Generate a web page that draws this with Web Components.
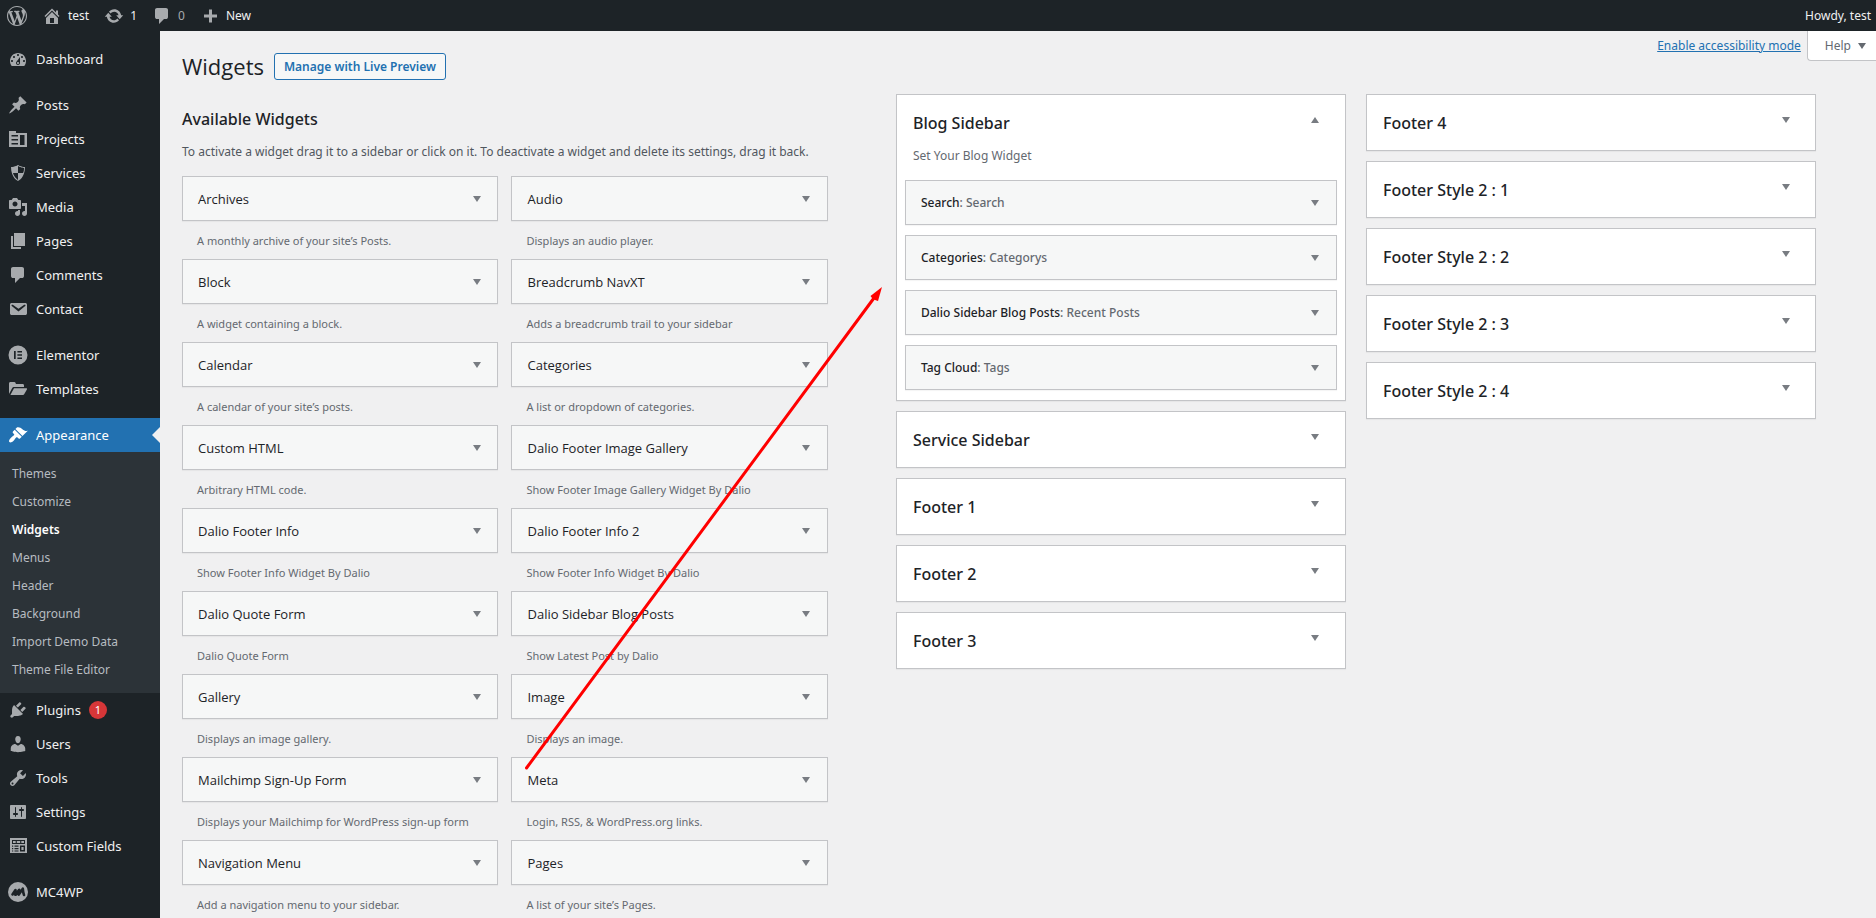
<!DOCTYPE html>
<html lang="en">
<head>
<meta charset="utf-8">
<title>Widgets ‹ test — WordPress</title>
<style>
  html, body { margin: 0; }
  body {
    min-height: 100vh;
    background: #f0f0f1;
    color: #3c434a;
    font: 12px/18px "Noto Sans", "Open Sans", sans-serif;
  }
</style>
</head>
<body>
<widgets-screen></widgets-screen>

<script>
const ICONS = {
  wordpress: '<path d="M20 10c0-5.51-4.49-10-10-10C4.48 0 0 4.49 0 10c0 5.52 4.48 10 10 10 5.51 0 10-4.48 10-10zM7.78 15.37L4.37 6.22c.55-.02 1.17-.08 1.17-.08.5-.06.44-1.13-.06-1.11 0 0-1.45.11-2.37.11-.18 0-.37 0-.58-.01C4.12 2.69 6.87 1.11 10 1.11c2.33 0 4.45.87 6.05 2.34-.68-.11-1.65.39-1.65 1.58 0 .74.45 1.36.9 2.1.35.61.55 1.36.55 2.46 0 1.49-1.4 5-1.4 5l-3.03-8.37c.54-.02.82-.17.82-.17.5-.05.44-1.25-.06-1.22 0 0-1.44.12-2.38.12-.87 0-2.33-.12-2.33-.12-.5-.03-.56 1.2-.06 1.22l.92.08 1.26 3.41zM17.41 10c.24-.64.74-1.87.43-4.25.7 1.29 1.05 2.71 1.05 4.25 0 3.29-1.73 6.24-4.4 7.78.97-2.59 1.94-5.2 2.92-7.78zM6.1 18.09C3.12 16.65 1.11 13.53 1.11 10c0-1.3.23-2.48.72-3.59C3.25 10.3 4.67 14.2 6.1 18.09zm4.03-6.63l2.58 6.98c-.86.29-1.76.45-2.71.45-.79 0-1.57-.11-2.29-.33.81-2.38 1.62-4.74 2.42-7.1z"/>',
  home: '<path d="M16 8.5l1.53 1.53-1.06 1.06L10 4.6l-6.47 6.47-1.06-1.06L10 2.5l4 4v-2h2v4zm-6-2.46l6 5.99V18H4v-5.97zM12 17v-5H8v5h4z"/>',
  update: '<path d="M10.2 3.28c3.53 0 6.43 2.61 6.92 6h2.08l-3.5 4-3.5-4h2.32c-.45-1.97-2.21-3.45-4.32-3.45-1.45 0-2.73.71-3.54 1.78L4.95 5.66C6.23 4.2 8.11 3.28 10.2 3.28zm-.4 13.44c-3.52 0-6.43-2.61-6.92-6H.8l3.5-4c1.17 1.33 2.33 2.67 3.5 4H5.48c.45 1.97 2.21 3.45 4.32 3.45 1.45 0 2.73-.71 3.54-1.78l1.71 1.95c-1.28 1.46-3.15 2.38-5.25 2.38z"/>',
  comments: '<path d="M5 2h9q.82 0 1.41.59T16 4v7q0 .82-.59 1.41T14 13h-2l-5 5v-5H5q-.82 0-1.41-.59T3 11V4q0-.82.59-1.41T5 2z"/>',
  plus: '<path d="M17 8.500v3h-5v5H9v-5H4v-3h5v-5h3v5h5z"/>',
  dashboard: '<path d="M3.760 17h12.480c1.100-1.370 1.760-3.110 1.760-5 0-4.420-3.580-8-8-8s-8 3.580-8 8c0 1.890.66 3.630 1.760 5zM10 5c.55 0 1 .45 1 1s-.45 1-1 1-1-.45-1-1 .45-1 1-1zM6 7c.55 0 1 .45 1 1s-.45 1-1 1-1-.45-1-1 .45-1 1-1zm8 0c.55 0 1 .45 1 1s-.45 1-1 1-1-.45-1-1 .45-1 1-1zm-5.370 5.550L12 8v6c0 1.100-.9 2-2 2s-2-.9-2-2c0-.57.24-1.080.63-1.450zM4 11c.55 0 1 .45 1 1s-.45 1-1 1-1-.45-1-1 .45-1 1-1zm12 0c.55 0 1 .45 1 1s-.45 1-1 1-1-.45-1-1 .45-1 1-1zm-5 3c0-.55-.45-1-1-1s-1 .45-1 1 .45 1 1 1 1-.45 1-1z"/>',
  post: '<path d="M10.440 3.020l1.820-1.820 6.360 6.350-1.830 1.820c-1.050-.68-2.480-.57-3.410.36l-.75.75c-.92.93-1.040 2.350-.35 3.410l-1.830 1.820-2.410-2.410-2.800 2.790c-.42.42-3.380 2.710-3.800 2.290s1.860-3.390 2.280-3.810l2.790-2.790L4.100 9.360l1.830-1.820c1.050.69 2.480.57 3.400-.36l.75-.75c.93-.92 1.050-2.350.36-3.410z"/>',
  projects: '<path fill-rule="evenodd" d="M1 2h7v2h11v14H1zM3.500 6v1.500H10V6zm0 4v1.500H10V10zm0 4v1.500H10V14zM12 6v10h4.500V6z"/>',
  shield: '<path d="M10 2s3 2 7 2c0 11-7 14-7 14S3 15 3 4c4 0 7-2 7-2zm0 8h5s1-1 1-5c0 0-5-1-6-2v7H5c1 4 5 7 5 7v-7z"/>',
  media: '<path d="M13 11V4c0-.55-.45-1-1-1h-1.670L9 1H5L3.670 3H2c-.55 0-1 .45-1 1v7c0 .55.45 1 1 1h10c.55 0 1-.45 1-1zM7 4.500c1.380 0 2.500 1.120 2.500 2.500S8.380 9.500 7 9.500 4.500 8.380 4.500 7 5.620 4.500 7 4.500zM14 6h5v10.500c0 1.380-1.120 2.500-2.500 2.500S14 17.880 14 16.500s1.120-2.500 2.500-2.500c.17 0 .34.02.5.05V9h-3V6zm-4 8.050V13h2v3.500c0 1.380-1.120 2.500-2.500 2.500S7 17.880 7 16.500 8.120 14 9.500 14c.17 0 .34.02.5.05z"/>',
  page: '<path d="M6 15V2h11v13H6zm-1 1h8v2H3V5h2v11z"/>',
  email: '<path d="M3.870 4h13.250C18.370 4 19 4.590 19 5.790v8.420c0 1.190-.63 1.790-1.880 1.790H3.870c-1.250 0-1.880-.6-1.880-1.790V5.790c0-1.200.63-1.790 1.880-1.790zm6.620 8.600l6.740-5.530c.24-.2.43-.66.13-1.070-.29-.41-.82-.42-1.170-.17l-5.700 3.860L4.800 5.830c-.35-.25-.88-.24-1.170.17-.3.41-.11.87.13 1.070z"/>',
  elementor: '<path fill-rule="evenodd" d="M10 0.500a9.500 9.500 0 1 0 0 19 9.500 9.500 0 0 0 0-19zM6 6h1.700v8H6zm3.400 0H14v1.500H9.400zm0 3.250H14v1.500H9.400zm0 3.250H14V14H9.400z"/>',
  templates: '<path d="M1 4.500C1 3.700 1.600 3 2.400 3h3.800c.7 0 1.200.4 1.400 1l.3 1h6.700c.8 0 1.400.6 1.400 1.400V8H6.200c-.9 0-1.700.5-2.100 1.300L1 15zM6 9.300h12.300c.6 0 .9.6.6 1.100l-2.600 4.700c-.3.600-.8.900-1.400.9H2.400z"/>',
  appearance: '<path d="M14.480 11.060L7.410 3.990l1.500-1.500c.5-.56 2.300-.47 3.510.32 1.210.8 1.430 1.280 2.910 2.100 1.180.64 2.450 1.260 4.450.85zm-.71.71L6.700 4.700 4.930 6.470c-.39.39-.39 1.020 0 1.410l1.060 1.060c.39.39.39 1.030 0 1.420-.6.6-1.430 1.110-2.210 1.690-.35.26-.7.53-1.010.84C1.430 14.230.4 16.080 1.400 17.070c.99 1 2.840-.03 4.180-1.360.31-.31.58-.66.85-1.020.57-.78 1.080-1.610 1.690-2.210.39-.39 1.020-.39 1.410 0l1.060 1.060c.39.39 1.020.39 1.410 0z"/>',
  plugins: '<path d="M13.110 4.360L9.870 7.600 8 5.730l3.240-3.240c.35-.34 1.050-.2 1.560.32.52.51.66 1.210.31 1.550zm-8 1.770l.91-1.120 9.010 9.010-1.190.84c-.71.71-2.630 1.160-3.820 1.160H6.140L4.900 17.260c-.59.59-1.540.59-2.120 0-.59-.58-.59-1.530 0-2.120l1.240-1.240v-3.880c0-1.130.4-3.190 1.090-3.890zm7.260 3.970l3.240-3.240c.34-.35 1.040-.21 1.550.31.52.51.66 1.210.31 1.550l-3.240 3.250z"/>',
  users: '<path d="M10 9.250c-2.270 0-2.730-3.440-2.730-3.440C7 4.020 7.820 2 9.970 2c2.160 0 2.980 2.020 2.710 3.810 0 0-.41 3.440-2.680 3.440zm0 2.570L12.720 10c2.390 0 4.520 2.330 4.520 4.530v2.490s-3.650 1.130-7.240 1.130c-3.650 0-7.240-1.130-7.240-1.130v-2.490c0-2.250 1.940-4.480 4.470-4.480z"/>',
  tools: '<path d="M16.680 9.770c-1.340 1.340-3.300 1.670-4.950.99l-5.410 6.520c-.99.99-2.590.99-3.580 0s-.99-2.590 0-3.570l6.520-5.420c-.68-1.650-.35-3.610.99-4.950 1.280-1.280 3.120-1.620 4.720-1.060l-2.890 2.890 2.820 2.820 2.860-2.870c.53 1.580.18 3.390-1.080 4.650zM3.810 16.210c.4.39 1.040.39 1.430 0 .4-.4.4-1.040 0-1.430-.39-.4-1.030-.4-1.430 0-.39.39-.39 1.030 0 1.430z"/>',
  settings: '<path d="M18 16V4c0-.55-.45-1-1-1H3c-.55 0-1 .45-1 1v12c0 .55.45 1 1 1h14c.55 0 1-.45 1-1zM8 11h1c.55 0 1 .45 1 1s-.45 1-1 1H8v1.500c0 .28-.22.5-.5.5s-.5-.22-.5-.5V13H6c-.55 0-1-.45-1-1s.45-1 1-1h1V5.500c0-.28.22-.5.5-.5s.5.22.5.5V11zm5-2h-1c-.55 0-1-.45-1-1s.45-1 1-1h1V5.500c0-.28.22-.5.5-.5s.5.22.5.5V7h1c.55 0 1 .45 1 1s-.45 1-1 1h-1v5.500c0 .28-.22.5-.5.5s-.5-.22-.5-.5V9z"/>',
  fields: '<path fill-rule="evenodd" d="M2 2h17v15H2zM4 4v4h13V4zm1 1v2h2.700V5zm3.800 0v2h3.400V5zm4.500 0v2H16V5zM4 9.500v1.200h1.200V9.500zm2.500 0v1.200h4V9.500zM4 12v1.200h1.200V12zm2.500 0v1.200h4V12zM4 14.400v1.200h1.200v-1.200zm2.500 0v1.200h4v-1.200zM12 9.500v6h5v-6zm1.400 1.400h2.200v3.200h-2.200z"/>',
  mailchimp: '<circle cx="10" cy="10" r="10"/><path fill="none" stroke="#1d2327" stroke-width="2.600" stroke-linejoin="round" stroke-linecap="round" d="M4.500 12.500l3-4.500-.2 4.800 3.900-5-.4 4.800 4-6c.2 2.200.3 4.500 1.200 6.400M8 12.500l3-3"/>'
};

/* Shared base: every element clones its own markup and styles into an open root. */
class ViewElement extends HTMLElement {
  connectedCallback() {
    if (this.shadowRoot) return;
    const template = document.createElement('template');
    template.innerHTML = `<style>${this.styles()}</style>${this.markup()}`;
    this.attachShadow({ mode: 'open' }).append(template.content.cloneNode(true));
  }
}

customElements.define('wp-icon', class extends ViewElement {
  styles() {
    return `:host { display: block; flex: none; width: 20px; height: 20px; color: #a7aaad; }
      svg { display: block; width: 100%; height: 100%; fill: currentColor; }`;
  }
  markup() { return `<svg viewBox="0 0 20 20" aria-hidden="true">${ICONS[this.getAttribute('name')]}</svg>`; }
});

customElements.define('admin-bar', class extends ViewElement {
  styles() {
    return `:host { display: block; background: #1d2327; color: #f0f0f1; }
      nav, .group { display: flex; align-items: center; }
      nav { height: 31px; padding: 0 5px 0 4px; justify-content: space-between; }
      .group { gap: 15px; }
      a { display: flex; align-items: center; gap: 6px; color: inherit; text-decoration: none; }
      .logo { padding: 0 0 0 3px; }
      .none { color: #a7aaad; }`;
  }
  markup() {
    return `<nav aria-label="Toolbar">
      <div class="group">
        <a class="logo" href="#about" aria-label="About WordPress"><wp-icon name="wordpress"></wp-icon></a>
        <a href="#site"><wp-icon name="home"></wp-icon><span>test</span></a>
        <a href="#updates"><wp-icon name="update"></wp-icon><span>1</span></a>
        <a class="none" href="#comments"><wp-icon name="comments"></wp-icon><span>0</span></a>
        <a href="#new"><wp-icon name="plus"></wp-icon><span>New</span></a>
      </div>
      <a href="#profile">Howdy, test</a>
    </nav>`;
  }
});

customElements.define('menu-item', class extends ViewElement {
  styles() {
    return `:host { display: block; }
      :host([spaced]) { margin-top: 12px; }
      a { display: flex; position: relative; align-items: center; gap: 8px; height: 34px; padding-left: 8px;
          color: #f0f0f1; font-size: 13px; text-decoration: none; }
      :host([current]) a { background: #2271b1; color: #fff; }
      :host([current]) wp-icon { color: #fff; }
      :host([current]) a::after { content: ""; position: absolute; right: 0; top: 9px;
          border: 8px solid transparent; border-right-color: #f0f0f1; border-left: 0; }
      .badge { width: 18px; border-radius: 9px; background: #d63638; color: #fff;
          font-size: 11px; line-height: 18px; text-align: center; }`;
  }
  markup() {
    const count = this.getAttribute('count');
    return `<a href="#menu"><wp-icon name="${this.getAttribute('icon')}"></wp-icon><slot></slot>
      ${count ? `<span class="badge">${count}</span>` : ''}</a>`;
  }
});

customElements.define('admin-menu', class extends ViewElement {
  styles() {
    return `:host { display: block; width: 160px; padding: 11px 0; box-sizing: border-box; background: #1d2327; }
      ul { margin: 0; padding: 8px 0 9px; list-style: none; background: #2c3338; }
      ul a { display: block; padding: 5px 12px; color: #b7bcc1; text-decoration: none; }
      ul a[aria-current] { color: #fff; font-weight: 600; }`;
  }
  markup() {
    const sub = ['Themes', 'Customize', 'Widgets', 'Menus', 'Header', 'Background', 'Import Demo Data', 'Theme File Editor'];
    return `<nav aria-label="Main menu">
      <menu-item icon="dashboard">Dashboard</menu-item>
      <menu-item icon="post" spaced>Posts</menu-item>
      <menu-item icon="projects">Projects</menu-item>
      <menu-item icon="shield">Services</menu-item>
      <menu-item icon="media">Media</menu-item>
      <menu-item icon="page">Pages</menu-item>
      <menu-item icon="comments">Comments</menu-item>
      <menu-item icon="email">Contact</menu-item>
      <menu-item icon="elementor" spaced>Elementor</menu-item>
      <menu-item icon="templates">Templates</menu-item>
      <menu-item icon="appearance" spaced current>Appearance</menu-item>
      <ul>${sub.map(s => `<li><a href="#sub"${s === 'Widgets' ? ' aria-current="page"' : ''}>${s}</a></li>`).join('')}</ul>
      <menu-item icon="plugins" count="1">Plugins</menu-item>
      <menu-item icon="users">Users</menu-item>
      <menu-item icon="tools">Tools</menu-item>
      <menu-item icon="settings">Settings</menu-item>
      <menu-item icon="fields">Custom Fields</menu-item>
      <menu-item icon="mailchimp" spaced>MC4WP</menu-item>
    </nav>`;
  }
});

customElements.define('screen-header', class extends ViewElement {
  styles() {
    return `:host { display: flex; justify-content: space-between; align-items: flex-start; }
      .title { display: flex; align-items: center; gap: 10px; padding: 21px 0 14px; }
      h1 { margin: 0; color: #1d2327; font: 400 22px/28px "Open Sans", sans-serif; }
      .action { padding: 0 9px; border: 1px solid #2271b1; border-radius: 3px; background: #f6f7f7;
          color: #2271b1; font-weight: 600; line-height: 25px; text-decoration: none; }
      .links { display: flex; align-items: flex-start; gap: 6px; }
      .links a { color: #2271b1; line-height: 30px; }
      button { display: flex; align-items: center; gap: 7px; height: 30px; padding: 0 10px 0 17px;
          border: 1px solid #c3c4c7; border-width: 0 0 1px 1px; border-radius: 0 0 0 4px; background: #fff;
          color: #646970; font: inherit; }
      svg { width: 8px; height: 6px; fill: currentColor; }`;
  }
  markup() {
    return `<div class="title"><h1>Widgets</h1><a class="action" href="#customize">Manage with Live Preview</a></div>
      <div class="links"><a href="#accessibility">Enable accessibility mode</a>
        <button type="button" aria-expanded="false">Help<svg viewBox="0 0 8 6" aria-hidden="true"><path d="M0 0h8L4 6z"/></svg></button></div>`;
  }
});

customElements.define('toggle-button', class extends ViewElement {
  styles() {
    return `:host { display: block; flex: none; }
      button { display: flex; align-items: center; justify-content: center; width: 41px; height: 44px; padding: 0;
          border: 0; background: none; color: #787c82; }
      svg { width: 8px; height: 6px; fill: currentColor; }`;
  }
  markup() {
    const open = this.hasAttribute('open');
    return `<button type="button" aria-expanded="${open}" aria-label="Toggle">
      <svg viewBox="0 0 8 6" aria-hidden="true"><path d="${open ? 'M0 6h8L4 0z' : 'M0 0h8L4 6z'}"/></svg></button>`;
  }
});

customElements.define('widget-card', class extends ViewElement {
  styles() {
    return `:host { display: block; min-width: 0; }
      .card { display: flex; align-items: center; justify-content: space-between; height: 43px; padding-left: 15px;
          border: 1px solid #c3c4c7; background: #f6f7f7; box-shadow: 0 1px 1px rgba(0,0,0,.04); }
      h3 { margin: 0; color: #1d2327; font: 500 13px/18px "Open Sans", sans-serif; }
      :host([placed]) h3 { font-family: "Noto Sans", sans-serif; font-size: 12px; }
      h3 span { color: #646970; }
      p { margin: 0; padding: 11px 15px 9px; color: #646970; font-size: 11px; }`;
  }
  markup() {
    const title = this.getAttribute('instance');
    return `<div class="card"><h3><slot></slot>${title ? `<span>: ${title}</span>` : ''}</h3><toggle-button></toggle-button></div>
      ${this.hasAttribute('about') ? `<p>${this.getAttribute('about')}</p>` : ''}`;
  }
});

customElements.define('sidebar-panel', class extends ViewElement {
  styles() {
    return `:host { display: block; border: 1px solid #c3c4c7; background: #fff; box-shadow: 0 1px 1px rgba(0,0,0,.04); }
      header { display: flex; justify-content: space-between; height: 55px; padding: 0 9px 0 16px; }
      h2 { margin: 0; color: #1d2327; font-size: 16px; font-weight: 500; line-height: 56px; }
      toggle-button { margin-top: 3px; }
      p { margin: 0; padding: 0 16px; color: #646970; line-height: 12px; }
      .widgets { display: flex; flex-direction: column; gap: 10px; padding: 18px 8px 10px; }`;
  }
  markup() {
    const open = this.hasAttribute('open');
    return `<header><h2>${this.getAttribute('name')}</h2><toggle-button ${open ? 'open' : ''}></toggle-button></header>
      ${open ? `<p>${this.getAttribute('about')}</p><div class="widgets"><slot></slot></div>` : ''}`;
  }
});

customElements.define('available-widgets', class extends ViewElement {
  styles() {
    return `:host { display: block; padding-top: 13px; }
      h2 { margin: 0; color: #1d2327; font-size: 16px; font-weight: 500; line-height: 24px; }
      p { margin: 12px 0 15px; color: #50575e; }
      .list { display: grid; grid-template-columns: 1fr 1fr; column-gap: 13px; }`;
  }
  markup() {
    const widgets = [
      ['Archives', 'A monthly archive of your site’s Posts.'], ['Audio', 'Displays an audio player.'],
      ['Block', 'A widget containing a block.'], ['Breadcrumb NavXT', 'Adds a breadcrumb trail to your sidebar'],
      ['Calendar', 'A calendar of your site’s posts.'], ['Categories', 'A list or dropdown of categories.'],
      ['Custom HTML', 'Arbitrary HTML code.'], ['Dalio Footer Image Gallery', 'Show Footer Image Gallery Widget By Dalio'],
      ['Dalio Footer Info', 'Show Footer Info Widget By Dalio'], ['Dalio Footer Info 2', 'Show Footer Info Widget By Dalio'],
      ['Dalio Quote Form', 'Dalio Quote Form'], ['Dalio Sidebar Blog Posts', 'Show Latest Post by Dalio'],
      ['Gallery', 'Displays an image gallery.'], ['Image', 'Displays an image.'],
      ['Mailchimp Sign-Up Form', 'Displays your Mailchimp for WordPress sign-up form'], ['Meta', 'Login, RSS, &amp; WordPress.org links.'],
      ['Navigation Menu', 'Add a navigation menu to your sidebar.'], ['Pages', 'A list of your site’s Pages.']
    ];
    return `<h2>Available Widgets</h2>
      <p>To activate a widget drag it to a sidebar or click on it. To deactivate a widget and delete its settings, drag it back.</p>
      <div class="list">${widgets.map(([n, d]) => `<widget-card about="${d}">${n}</widget-card>`).join('')}</div>`;
  }
});

/* Red pointer laid over the workspace, from the Meta widget to the sidebars. */
customElements.define('drag-arrow', class extends ViewElement {
  styles() {
    return `:host { position: absolute; left: 364px; top: 256px; width: 360px; height: 484px; pointer-events: none; }
      svg { display: block; width: 100%; height: 100%; }`;
  }
  markup() {
    return `<svg viewBox="0 0 360 484" aria-hidden="true"><path d="M2.500 481L350 11" fill="none" stroke="#f00" stroke-width="3" stroke-linecap="round"/>
      <path d="M358 0l-4 14-3-1-3-2-1.500-2z" fill="#f00"/></svg>`;
  }
});

customElements.define('widgets-screen', class extends ViewElement {
  styles() {
    return `:host { display: flex; flex-direction: column; min-height: 100vh; }
      .body { display: flex; flex: 1; }
      admin-menu { flex: none; }
      main { position: relative; flex: 1; min-width: 0; padding-left: 22px; }
      .work { display: flex; gap: 68px; padding-right: 60px; }
      available-widgets { flex: 33 1 0; min-width: 0; }
      .areas { display: grid; grid-template-columns: 1fr 1fr; column-gap: 20px; align-items: start; flex: 47 1 0; min-width: 0; }
      .column { display: grid; gap: 10px; }`;
  }
  markup() {
    const panels = names => names.map(n => `<sidebar-panel name="${n}"></sidebar-panel>`).join('');
    return `<admin-bar></admin-bar>
      <div class="body">
        <admin-menu></admin-menu>
        <main>
          <screen-header></screen-header>
          <div class="work">
            <available-widgets></available-widgets>
            <div class="areas">
              <div class="column">
                <sidebar-panel name="Blog Sidebar" about="Set Your Blog Widget" open>
                  <widget-card placed instance="Search">Search</widget-card>
                  <widget-card placed instance="Categorys">Categories</widget-card>
                  <widget-card placed instance="Recent Posts">Dalio Sidebar Blog Posts</widget-card>
                  <widget-card placed instance="Tags">Tag Cloud</widget-card>
                </sidebar-panel>
                ${panels(['Service Sidebar', 'Footer 1', 'Footer 2', 'Footer 3'])}
              </div>
              <div class="column">${panels(['Footer 4', 'Footer Style 2 : 1', 'Footer Style 2 : 2', 'Footer Style 2 : 3', 'Footer Style 2 : 4'])}</div>
            </div>
          </div>
          <drag-arrow></drag-arrow>
        </main>
      </div>`;
  }
});
</script>
</body>
</html>
